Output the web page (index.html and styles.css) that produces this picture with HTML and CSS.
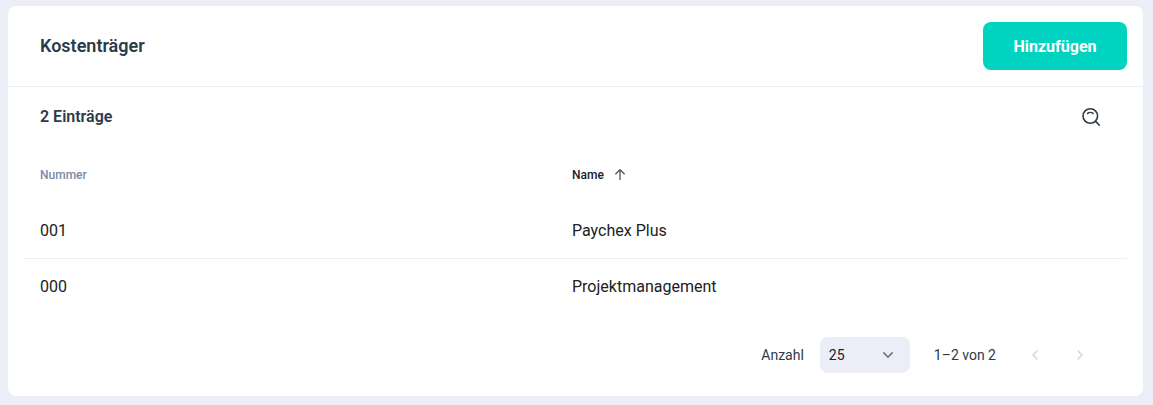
FILE: index.html
```html
<!doctype html>
<html lang="de">
  <head>
    <meta charset="UTF-8">
    <meta name="viewport" content="width=device-width, initial-scale=1.0">
    <title>Kostenträger</title>
    <link rel="stylesheet" href="styles.css">
  </head>
  <body>
    <main class="card">
      <header class="card-header">
        <h1>Kostenträger</h1>
        <button type="button" class="btn-primary">Hinzufügen</button>
      </header>
      <div class="toolbar">
        <h2>2 Einträge</h2>
        <button type="button" class="icon-btn" aria-label="Suchen">
          <svg width="20" height="20" viewBox="0 0 20 20" fill="none" stroke="currentColor" stroke-width="1.6" stroke-linecap="round">
            <circle cx="9.3" cy="9" r="7.3"/>
            <path d="M14.6 14.4L18.4 18.2"/>
            <path d="M6.6 6.4C8 5.1 10.6 5.1 12 6.4"/>
          </svg>
        </button>
      </div>
      <table class="entries">
        <thead>
          <tr>
            <th scope="col" class="col-number">Nummer</th>
            <th scope="col" class="sorted" aria-sort="ascending">
              <span class="sort-label">
                Name
                <svg width="12" height="12" viewBox="0 0 12 12" fill="none" stroke="currentColor" stroke-width="1.3">
                  <path d="M6 11V0.9M1.4 5.3L6 0.7L10.6 5.3"/>
                </svg>
              </span>
            </th>
          </tr>
        </thead>
        <tbody>
          <tr>
            <td>001</td>
            <td>Paychex Plus</td>
          </tr>
          <tr>
            <td>000</td>
            <td>Projektmanagement</td>
          </tr>
        </tbody>
      </table>
      <!-- Pagination -->
      <footer class="pagination">
        <label for="page-size">Anzahl</label>
        <div class="select">
          <select id="page-size">
            <option>10</option>
            <option selected>25</option>
            <option>50</option>
          </select>
          <svg width="12" height="8" viewBox="0 0 12 8" fill="none" stroke="currentColor" stroke-width="1.6">
            <path d="M1.4 1.4L6 6L10.6 1.4"/>
          </svg>
        </div>
        <span class="range">1–2 von 2</span>
        <button type="button" class="page-btn" aria-label="Vorherige Seite" disabled>
          <svg width="8" height="12" viewBox="0 0 8 12" fill="none" stroke="currentColor" stroke-width="1.5">
            <path d="M6.4 1.6L2 6L6.4 10.4"/>
          </svg>
        </button>
        <button type="button" class="page-btn" aria-label="Nächste Seite" disabled>
          <svg width="8" height="12" viewBox="0 0 8 12" fill="none" stroke="currentColor" stroke-width="1.5">
            <path d="M1.6 1.6L6 6L1.6 10.4"/>
          </svg>
        </button>
      </footer>
    </main>
  </body>
</html>
```
FILE: styles.css
```css
:root {
  --primary: #00d3bf;
  --background: #ebeef6;
  --heading: #2c3b4a;
  --text: #212121;
  --muted: #7b8ba5;
}
* {
  box-sizing: border-box;
}
body {
  margin: 0;
  padding: 6px 10px 9px 8px;
  background: var(--background);
  color: var(--text);
  font-family: Roboto, "Liberation Sans", sans-serif;
  font-size: 16px;
}
button {
  border: none;
  background: none;
  padding: 0;
  font: inherit;
  cursor: pointer;
}
svg {
  display: block;
}
.card {
  background: #fff;
  border-radius: 8px;
}
.card-header {
  display: flex;
  align-items: center;
  justify-content: space-between;
  padding: 16px 16px 16px 32px;
  border-bottom: 1px solid var(--background);
}
h1, h2 {
  margin: 0;
  color: var(--heading);
  font-weight: 600;
  line-height: 24px;
}
h1 {
  font-size: 18px;
}
h2 {
  font-size: 16px;
}
.btn-primary {
  min-width: 144px;
  height: 48px;
  padding: 0 24px;
  border-radius: 8px;
  background: var(--primary);
  color: #fff;
  font-weight: 700;
}
.toolbar {
  display: flex;
  align-items: center;
  justify-content: space-between;
  height: 60px;
  padding: 0 32px;
}
.icon-btn {
  display: flex;
  align-items: center;
  justify-content: center;
  width: 40px;
  height: 40px;
  color: var(--heading);
}
/* Table */
.entries {
  width: calc(100% - 32px);
  margin: 0 16px;
  border-collapse: separate;
  border-spacing: 0;
  table-layout: fixed;
}
.entries th, .entries td {
  height: 56px;
  padding: 0 16px;
  text-align: left;
}
.entries th {
  color: var(--muted);
  font-size: 12px;
  font-weight: 500;
}
.entries th.sorted {
  color: var(--text);
}
.entries td {
  border-bottom: 1px solid var(--background);
}
.entries tr:last-child td {
  border-bottom-color: transparent;
}
.col-number {
  width: 532px;
}
.sort-label {
  display: flex;
  align-items: center;
  gap: 10px;
}
.sort-label svg {
  color: #555;
}
/* Pagination */
.pagination {
  display: flex;
  align-items: center;
  justify-content: flex-end;
  padding: 22px 41px 23px 16px;
  color: var(--heading);
  font-size: 14px;
  line-height: 18px;
}
.select {
  position: relative;
  margin: 0 24px 0 16px;
}
.select select {
  display: block;
  appearance: none;
  width: 90px;
  height: 36px;
  padding: 0 32px 0 9px;
  border: none;
  border-radius: 8px;
  background: var(--background);
  color: var(--text);
  font: inherit;
}
.select svg {
  position: absolute;
  top: 14px;
  right: 16px;
  color: #757575;
  pointer-events: none;
}
.range {
  margin-right: 16px;
}
.page-btn {
  display: flex;
  align-items: center;
  justify-content: center;
  width: 45px;
  height: 36px;
  color: #d3d9e6;
  cursor: default;
}
```
